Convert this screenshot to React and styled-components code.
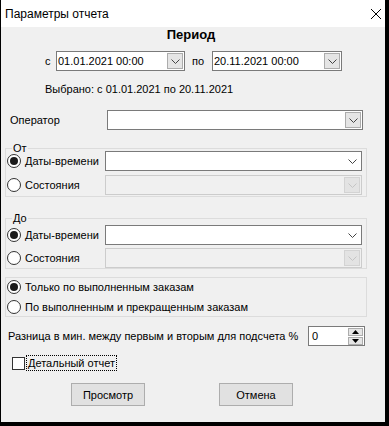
import styled, { createGlobalStyle } from 'styled-components'

const GlobalStyle = createGlobalStyle`
  body {
    margin: 0;
    background: #000;
    font-family: "Liberation Sans", Arial, sans-serif;
  }
`

const Window = styled.div`
  width: 389px;
  height: 426px;
  box-sizing: border-box;
  border-left: 1px solid #000;
  border-right: 4px solid #000;
  border-bottom: 4px solid #000;
  display: flex;
  flex-direction: column;
  background: #f0f0f0;
  color: #000;
  font-size: 11px;
`

const TitleBar = styled.div`
  height: 27px;
  flex-shrink: 0;
  background: #fff;
  display: flex;
  align-items: center;
  justify-content: space-between;
  padding: 0 3px 0 4px;
  font-size: 12px;
`

const Body = styled.div`
  flex: 1;
  display: flex;
  flex-direction: column;
  padding: 0 18px 0 4px;
`

const Heading = styled.div`
  font-size: 13px;
  font-weight: bold;
  line-height: 16px;
  text-align: center;
  padding-left: 10px;
`

const PeriodRow = styled.div`
  margin-top: 8px;
  display: flex;
  align-items: center;
  padding-left: 40px;
`

const RowLabel = styled.span`
  width: ${(p) => p.$width}px;
  padding-left: ${(p) => p.$pad || 0}px;
  box-sizing: border-box;
  flex-shrink: 0;
`

const Selected = styled.div`
  margin-top: 11px;
  line-height: 14px;
  padding-left: 40px;
`

const OperatorRow = styled.div`
  margin-top: 14px;
  display: flex;
  align-items: center;
`

const Combo = styled.div`
  box-sizing: border-box;
  width: ${(p) => p.$width}px;
  height: 20px;
  display: flex;
  align-items: center;
  padding-left: 1px;
  border: 1px solid ${(p) => (p.$disabled ? '#cccccc' : '#7a7a7a')};
  background: ${(p) => (p.$disabled ? '#f0f0f0' : '#fff')};
`

const DropButton = styled.span`
  margin-left: auto;
  margin-right: 1px;
  width: 16px;
  height: 16px;
  box-sizing: border-box;
  display: flex;
  align-items: center;
  justify-content: center;
  background: ${(p) =>
    p.$plain ? 'transparent' : p.$disabled ? '#e3e3e3' : '#e5e5e5'};
  border: 1px solid
    ${(p) => (p.$plain ? 'transparent' : p.$disabled ? '#d3d3d3' : '#acacac')};
`

const Group = styled.div`
  position: relative;
  margin-top: ${(p) => p.$mt}px;
  border: 1px solid #dcdcdc;
  padding: ${(p) => p.$pt}px 4px ${(p) => p.$pb}px 1px;
  display: flex;
  flex-direction: column;
  gap: ${(p) => p.$gap}px;
`

// caption sits over the group's top border
const Caption = styled.span`
  position: absolute;
  top: -7px;
  left: 6px;
  padding: 0 1px;
  line-height: 12px;
  background: #f0f0f0;
`

const GroupRow = styled.div`
  display: flex;
  align-items: center;
  height: ${(p) => p.$h || 20}px;
`

const RadioLabel = styled.label`
  display: flex;
  align-items: center;
  gap: 4px;
  width: ${(p) => (p.$width ? p.$width + 'px' : 'auto')};
  flex-shrink: 0;
`

const RadioCircle = styled.span`
  width: 14px;
  height: 14px;
  box-sizing: border-box;
  border-radius: 50%;
  border: 1px solid #333;
  background: #fff;
  display: flex;
  align-items: center;
  justify-content: center;
  &::after {
    content: '';
    width: 8px;
    height: 8px;
    border-radius: 50%;
    background: #1a1a1a;
    display: ${(p) => (p.$checked ? 'block' : 'none')};
  }
`

const SpinRow = styled.div`
  margin-top: 9px;
  display: flex;
  align-items: center;
  justify-content: space-between;
  padding: 0 2px 0 3px;
`

const SpinBox = styled.div`
  box-sizing: border-box;
  width: 57px;
  height: 20px;
  border: 1px solid #7a7a7a;
  background: #fff;
  display: flex;
  align-items: center;
  padding-left: 3px;
`

const SpinButtons = styled.div`
  margin-left: auto;
  margin-right: 1px;
  display: flex;
  flex-direction: column;
  gap: 1px;
`

const SpinButton = styled.span`
  width: 15px;
  height: 8px;
  box-sizing: border-box;
  background: #e5e5e5;
  border: 1px solid #acacac;
  display: flex;
  align-items: center;
  justify-content: center;
`

const CheckRow = styled.div`
  margin-top: 9px;
  display: flex;
  align-items: center;
  padding-left: 7px;
`

const CheckBox = styled.span`
  width: 13px;
  height: 13px;
  box-sizing: border-box;
  border: 1px solid #333;
  background: #fff;
`

const FocusLabel = styled.span`
  margin-left: 1px;
  border: 1px dotted #000;
  padding: 0 1px;
  line-height: 14px;
`

const ButtonRow = styled.div`
  margin-top: 12px;
  display: flex;
  gap: 74px;
  padding-left: 66px;
`

const Button = styled.button`
  width: 74px;
  height: 23px;
  background: #e1e1e1;
  border: 1px solid #adadad;
  font: inherit;
  color: #000;
  padding: 0;
`

const Chevron = ({ color = '#444' }) => (
  <svg width="9" height="5" viewBox="0 0 9 5">
    <path d="M0.5 0.5 L4.5 4.5 L8.5 0.5" fill="none" stroke={color} strokeWidth="1" />
  </svg>
)

const Triangle = ({ up }) => (
  <svg width="7" height="4" viewBox="0 0 7 4">
    <path d={up ? 'M0 4 L3.5 0 L7 4 Z' : 'M0 0 L3.5 4 L7 0 Z'} fill="#000" />
  </svg>
)

const CloseIcon = () => (
  <svg width="12" height="12" viewBox="0 0 12 12">
    <path d="M1 1 L11 11 M11 1 L1 11" stroke="#000" strokeWidth="1" />
  </svg>
)

const ComboField = ({ width, value, disabled, plain }) => (
  <Combo $width={width} $disabled={disabled}>
    <span>{value}</span>
    <DropButton $plain={plain} $disabled={disabled}>
      <Chevron color={disabled ? '#c4c4c4' : '#444'} />
    </DropButton>
  </Combo>
)

const Radio = ({ checked, label, width }) => (
  <RadioLabel $width={width}>
    <RadioCircle $checked={checked} />
    <span>{label}</span>
  </RadioLabel>
)

const SourceGroup = ({ caption, mt, pt, pb, gap }) => (
  <Group $mt={mt} $pt={pt} $pb={pb} $gap={gap}>
    <Caption>{caption}</Caption>
    <GroupRow>
      <Radio checked label="Даты-времени" width={98} />
      <ComboField width={257} plain />
    </GroupRow>
    <GroupRow>
      <Radio label="Состояния" width={98} />
      <ComboField width={257} disabled />
    </GroupRow>
  </Group>
)

export default function App() {
  return (
    <>
      <GlobalStyle />
      <Window>
        <TitleBar>
          <span>Параметры отчета</span>
          <CloseIcon />
        </TitleBar>
        <Body>
          <Heading>Период</Heading>
          <PeriodRow>
            <RowLabel $width={11}>с</RowLabel>
            <ComboField width={129} value="01.01.2021 00:00" />
            <RowLabel $width={27} $pad={7}>по</RowLabel>
            <ComboField width={130} value="20.11.2021 00:00" />
          </PeriodRow>
          <Selected>Выбрано: с 01.01.2021 по 20.11.2021</Selected>
          <OperatorRow>
            <RowLabel $width={102} $pad={5}>Оператор</RowLabel>
            <ComboField width={256} />
          </OperatorRow>
          <SourceGroup caption="От" mt={18} pt={2} pb={1} gap={4} />
          <SourceGroup caption="До" mt={21} pt={6} pb={0} gap={3} />
          <Group $mt={8} $pt={0} $pb={0} $gap={2}>
            <GroupRow $h={18}>
              <Radio checked label="Только по выполненным заказам" />
            </GroupRow>
            <GroupRow $h={18}>
              <Radio label="По выполненным и прекращенным заказам" />
            </GroupRow>
          </Group>
          <SpinRow>
            <span>Разница в мин. между первым и вторым для подсчета %</span>
            <SpinBox>
              <span>0</span>
              <SpinButtons>
                <SpinButton>
                  <Triangle up />
                </SpinButton>
                <SpinButton>
                  <Triangle />
                </SpinButton>
              </SpinButtons>
            </SpinBox>
          </SpinRow>
          <CheckRow>
            <CheckBox />
            <FocusLabel>Детальный отчет</FocusLabel>
          </CheckRow>
          <ButtonRow>
            <Button>Просмотр</Button>
            <Button>Отмена</Button>
          </ButtonRow>
        </Body>
      </Window>
    </>
  )
}
